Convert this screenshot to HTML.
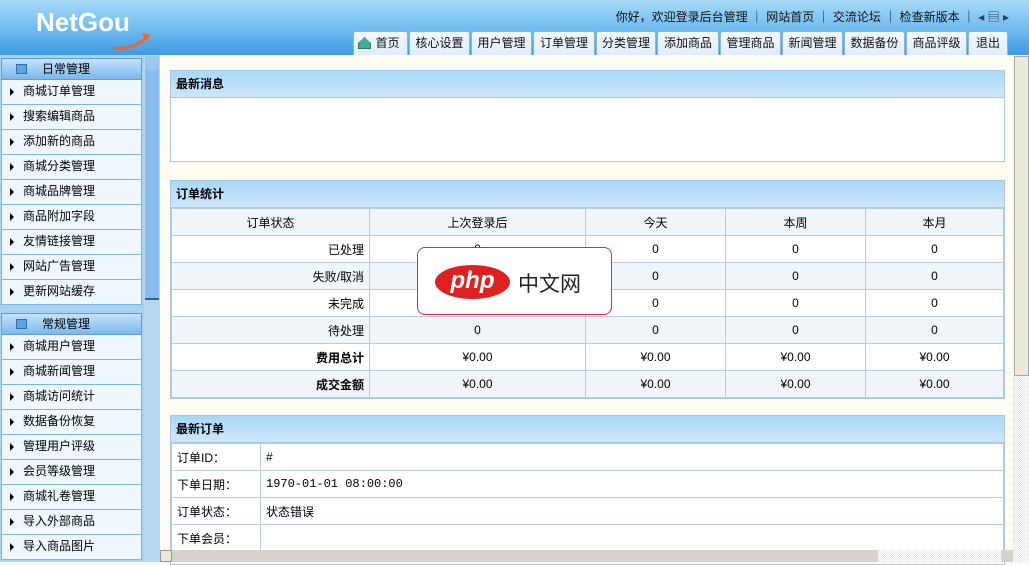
<!DOCTYPE html>
<html><head><meta charset="utf-8"><style>
*{margin:0;padding:0;box-sizing:border-box}
body{width:1029px;height:562px;overflow:hidden;position:relative;font-family:"Liberation Sans","Noto Sans CJK SC",sans-serif;font-size:12px;color:#000;background:#fffcf2}
#hd{position:absolute;left:0;top:0;width:1029px;height:55px;background:linear-gradient(#a9dbf8,#72bdf0 50%,#3f9ae3)}
#logo{position:absolute;left:36px;top:7px;font:bold 26px "Liberation Sans",sans-serif;color:#fff}
#top{position:absolute;right:20px;top:8px;font-size:12px;color:#111}
.tab{position:absolute;top:31px;height:24px;background:linear-gradient(#f4f9fe,#dfeefb);border:1px solid #8bb8e0;border-bottom:none;border-radius:3px 3px 0 0;font-size:12px;line-height:23px;text-align:center;color:#111}
#side{position:absolute;left:0;top:55px;width:144px;height:507px;background:#a9d3f4}
.gh{position:absolute;left:1px;width:141px;height:22px;background:linear-gradient(#c4e3fb,#7ab9ee);border:1px solid #5f9fd6;font-size:12px;line-height:20px;padding-left:40px}
.gh i{position:absolute;left:14px;top:5px;width:11px;height:10px;background:#5fa3da;border:1px solid #2f6fae}
.it{position:absolute;left:1px;width:141px;height:25px;background:#eef8fe;border:1px solid #7eb6dd;border-top:none;line-height:23px;padding-left:21px}
.it:before{content:"";position:absolute;left:8px;top:8px;border-left:4px solid #000;border-top:4px solid transparent;border-bottom:4px solid transparent}
#sb{position:absolute;left:144px;top:55px;width:16px;height:507px;background:#b7d7f3}
#sbt{position:absolute;left:145px;top:56px;width:14px;height:14px;background:#9bc6ee}
#sbth{position:absolute;left:145px;top:70px;width:14px;height:230px;background:#8bbef0;border-bottom:2px solid #2c5d8e}
#vs{position:absolute;left:1013px;top:55px;width:16px;height:507px;background:repeating-conic-gradient(#e8e8e8 0 25%,#fff 0 50%) 0 0/2px 2px}
#vst{position:absolute;left:1014px;top:56px;width:15px;height:320px;background:#ece9d8;border:1px solid #aaa}
#hs{position:absolute;left:160px;top:550px;width:853px;height:12px;background:#d6d3ce}
.p{position:absolute;left:170px;width:835px;border:1px solid #a7c8e0;background:#fff}
.ph{height:27px;background:linear-gradient(#a8d9fa,#cfe6fa);border-bottom:1px solid #a7c8e0;font-weight:bold;line-height:26px;padding-left:5px}
table{border-collapse:collapse;width:100%}
td{border:1px solid #b4cde0;height:27px;text-align:center}
tr:nth-child(odd) td{background:#f0f5fa}
td.r{text-align:right;padding-right:5px}
.t3 td{background:#fff!important;text-align:left;padding-left:5px}
#php{position:absolute;left:417px;top:247px;width:195px;height:68px;background:#fff;border:1px solid #d03040;border-radius:8px}
#php b{position:absolute;left:17px;top:17px;width:75px;height:34px;border-radius:50%;background:#e02020;color:#fff;font:italic bold 24px "Liberation Sans",sans-serif;text-align:center;line-height:32px}
#php span{position:absolute;left:100px;top:20px;font-size:21px;color:#222}
</style></head><body>
<div id="hd">
<div id="logo">NetGou</div>
<svg style="position:absolute;left:112px;top:30px" width="40" height="22"><path d="M2 18 Q22 20 36 6" stroke="#e86a2a" stroke-width="3" fill="none"/><path d="M30 4 L38 4 L35 11z" fill="#e86a2a"/></svg>
<div id="top">你好，欢迎登录后台管理 ｜ 网站首页 ｜ 交流论坛 ｜ 检查新版本 ｜ <span style="color:#245">◂ ▤ ▸</span></div>
<div class="tab" style="left:353px;width:55px;padding-left:14px"><span style="position:absolute;left:4px;top:5px;width:13px;height:12px;background:#4a9;border:1px solid #375;clip-path:polygon(50% 0,100% 50%,100% 100%,0 100%,0 50%)"></span>首页</div>
<div class="tab" style="left:409px;width:61px">核心设置</div>
<div class="tab" style="left:471px;width:61px">用户管理</div>
<div class="tab" style="left:533px;width:62px">订单管理</div>
<div class="tab" style="left:596px;width:60px">分类管理</div>
<div class="tab" style="left:657px;width:62px">添加商品</div>
<div class="tab" style="left:720px;width:61px">管理商品</div>
<div class="tab" style="left:782px;width:61px">新闻管理</div>
<div class="tab" style="left:844px;width:61px">数据备份</div>
<div class="tab" style="left:906px;width:61px">商品评级</div>
<div class="tab" style="left:968px;width:40px">退出</div>
</div>
<div id="side">
<div class="gh" style="top:3px"><i></i>日常管理</div>
<div class="it" style="top:25px">商城订单管理</div>
<div class="it" style="top:50px">搜索编辑商品</div>
<div class="it" style="top:75px">添加新的商品</div>
<div class="it" style="top:100px">商城分类管理</div>
<div class="it" style="top:125px">商城品牌管理</div>
<div class="it" style="top:150px">商品附加字段</div>
<div class="it" style="top:175px">友情链接管理</div>
<div class="it" style="top:200px">网站广告管理</div>
<div class="it" style="top:225px">更新网站缓存</div>
<div class="gh" style="top:258px"><i></i>常规管理</div>
<div class="it" style="top:280px">商城用户管理</div>
<div class="it" style="top:305px">商城新闻管理</div>
<div class="it" style="top:330px">商城访问统计</div>
<div class="it" style="top:355px">数据备份恢复</div>
<div class="it" style="top:380px">管理用户评级</div>
<div class="it" style="top:405px">会员等级管理</div>
<div class="it" style="top:430px">商城礼卷管理</div>
<div class="it" style="top:455px">导入外部商品</div>
<div class="it" style="top:480px">导入商品图片</div>
</div>
<div id="sb"></div><div id="sbt"></div><div id="sbth"></div>
<div class="p" style="top:70px;height:92px"><div class="ph">最新消息</div></div>
<div class="p" style="top:180px"><div class="ph">订单统计</div>
<table>
<tr><td style="width:198px">订单状态</td><td style="width:216px">上次登录后</td><td style="width:140px">今天</td><td style="width:140px">本周</td><td>本月</td></tr>
<tr><td class="r">已处理</td><td>0</td><td>0</td><td>0</td><td>0</td></tr>
<tr><td class="r">失败/取消</td><td>0</td><td>0</td><td>0</td><td>0</td></tr>
<tr><td class="r">未完成</td><td>0</td><td>0</td><td>0</td><td>0</td></tr>
<tr><td class="r">待处理</td><td>0</td><td>0</td><td>0</td><td>0</td></tr>
<tr><td class="r"><b>费用总计</b></td><td>¥0.00</td><td>¥0.00</td><td>¥0.00</td><td>¥0.00</td></tr>
<tr><td class="r"><b>成交金额</b></td><td>¥0.00</td><td>¥0.00</td><td>¥0.00</td><td>¥0.00</td></tr>
</table></div>
<div class="p" style="top:415px;height:150px"><div class="ph">最新订单</div>
<table class="t3">
<tr><td style="width:89px">订单ID：</td><td>#</td></tr>
<tr><td>下单日期：</td><td style="font-family:'Liberation Mono',monospace">1970-01-01 08:00:00</td></tr>
<tr><td>订单状态：</td><td>状态错误</td></tr>
<tr><td>下单会员：</td><td></td></tr>
</table></div>
<div id="php"><b>php</b><span>中文网</span></div>
<div id="vs"></div><div id="vst"></div>
<div id="hs"><div style="position:absolute;left:0;top:0;width:12px;height:12px;background:#ece9d8;border:1px solid #999"></div><div style="position:absolute;left:718px;top:0;width:123px;height:12px;background:repeating-conic-gradient(#e8e8e8 0 25%,#fff 0 50%) 0 0/2px 2px"></div></div>
</body></html>
